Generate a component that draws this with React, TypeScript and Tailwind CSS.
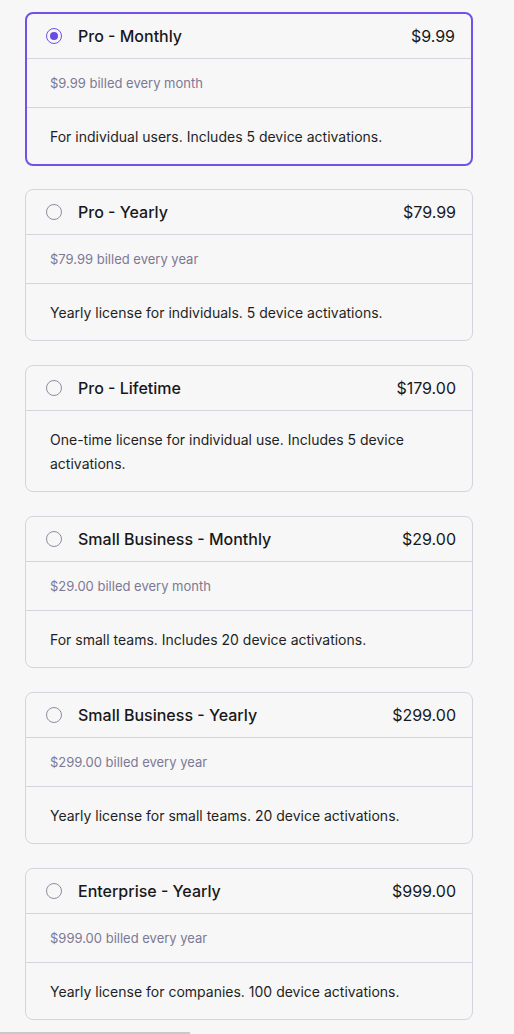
import React from "react";

type Plan = {
  name: string;
  price: string;
  billed?: string;
  desc: string;
};

const plans: Plan[] = [
  { name: "Pro - Monthly", price: "$9.99", billed: "$9.99 billed every month", desc: "For individual users. Includes 5 device activations." },
  { name: "Pro - Yearly", price: "$79.99", billed: "$79.99 billed every year", desc: "Yearly license for individuals. 5 device activations." },
  { name: "Pro - Lifetime", price: "$179.00", desc: "One-time license for individual use. Includes 5 device activations." },
  { name: "Small Business - Monthly", price: "$29.00", billed: "$29.00 billed every month", desc: "For small teams. Includes 20 device activations." },
  { name: "Small Business - Yearly", price: "$299.00", billed: "$299.00 billed every year", desc: "Yearly license for small teams. 20 device activations." },
  { name: "Enterprise - Yearly", price: "$999.00", billed: "$999.00 billed every year", desc: "Yearly license for companies. 100 device activations." },
];

function Card({ plan, selected }: { plan: Plan; selected: boolean }) {
  return (
    <div
      className={
        selected
          ? "w-[448px] rounded-lg border-2 border-[#7152e6] bg-[#f7f7f7] mb-[23px]"
          : "w-[448px] rounded-lg border border-[#d5d3df] bg-[#f7f7f7] mb-6"
      }
    >
      <div
        className={
          "flex h-[45px] items-center border-b border-[#d5d3df] pr-4 " +
          (selected ? "pl-[19px]" : "pl-5")
        }
      >
        {selected ? (
          <span className="flex h-4 w-4 items-center justify-center rounded-full border-[1.5px] border-[#7152e6]">
            <span className="h-[8px] w-[8px] rounded-full bg-[#6a4be6]" />
          </span>
        ) : (
          <span className="h-4 w-4 rounded-full border-[1.5px] border-[#8f8ca6]" />
        )}
        <span className="ml-4 text-[16px] font-medium text-[#18181b]">{plan.name}</span>
        <span className="ml-auto text-[16px] text-[#18181b]">{plan.price}</span>
      </div>
      {plan.billed && (
        <div
          className={
            "flex h-[49px] items-center border-b border-[#d5d3df] pt-[2px] text-[13px] text-[#7c7994] " +
            (selected ? "pl-[23px]" : "pl-6")
          }
        >
          {plan.billed}
        </div>
      )}
      <div
        className={
          "pt-[17px] pb-[15px] pr-6 text-[14px] leading-6 text-[#1f1f23] " +
          (selected ? "pl-[23px]" : "pl-6")
        }
      >
        {plan.desc}
      </div>
    </div>
  );
}

export default function App() {
  return (
    <div
      className="min-h-[1034px] bg-[#f7f7f7] pt-3"
      style={{ fontFamily: "Inter, 'Noto Sans', sans-serif" }}
    >
      <div className="pl-[25px]">
        {plans.map((p, i) => (
          <Card key={p.name} plan={p} selected={i === 0} />
        ))}
      </div>
      <div className="-mt-3 h-[2px] w-[190px] bg-[#c9c9c9]" />
    </div>
  );
}
